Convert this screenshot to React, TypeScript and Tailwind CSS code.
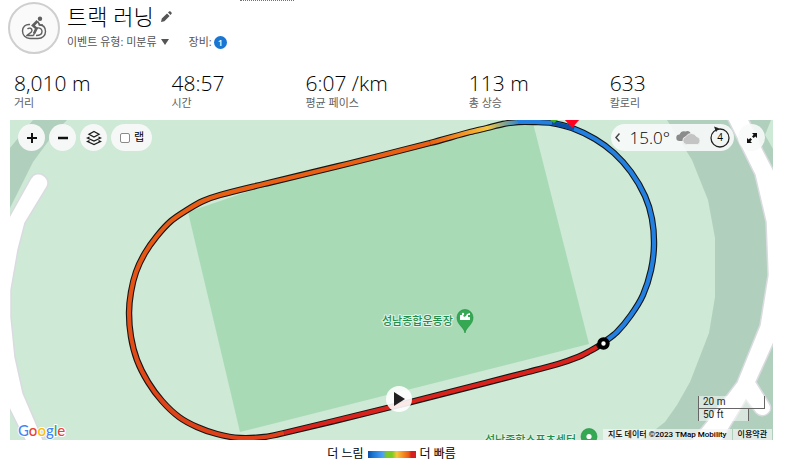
import { useState } from "react";

const STATS = [
  { value: "8,010 m", label: "거리" },
  { value: "48:57", label: "시간" },
  { value: "6:07 /km", label: "평균 페이스" },
  { value: "113 m", label: "총 상승" },
  { value: "633", label: "칼로리" },
];

type Point = [number, number];

// lap points, split where the pace colour changes
const FAST: Point[] = [
  [603, 343], [617, 332], [631, 315], [643, 295], [651, 270], [654, 245], [652, 219],
  [645, 196], [631, 172], [614, 153], [595, 139], [572, 128], [552, 123], [535, 122], [518, 122],
];
const FADE: Point[] = [[518, 122], [503, 124], [487, 128], [470, 132], [430, 143]];
const STEADY: Point[] = [
  [430, 143], [347, 164], [264, 184], [220, 195], [203, 201], [187, 210], [171, 221], [157, 236],
  [145, 253], [136, 272], [131, 292], [129, 313], [131, 337], [137, 360], [148, 382], [162, 401],
  [179, 417], [197, 427], [217, 434], [240, 438], [264, 437], [284, 433],
];
const SLOW: Point[] = [[284, 433], [387, 408], [528, 372], [558, 364], [578, 357], [590, 351], [597, 347]];

// Catmull-Rom spline through the points as a cubic path
const smooth = (pts: Point[]) => {
  let d = `M${pts[0][0]} ${pts[0][1]}`;
  for (let i = 0; i < pts.length - 1; i++) {
    const p0 = pts[i - 1] ?? pts[i];
    const p1 = pts[i];
    const p2 = pts[i + 1];
    const p3 = pts[i + 2] ?? p2;
    const len = Math.hypot(p2[0] - p1[0], p2[1] - p1[1]);
    const k1 = len / (Math.hypot(p2[0] - p0[0], p2[1] - p0[1]) * 3);
    const k2 = len / (Math.hypot(p3[0] - p1[0], p3[1] - p1[1]) * 3);
    d += `C${p1[0] + (p2[0] - p0[0]) * k1} ${p1[1] + (p2[1] - p0[1]) * k1} ${
      p2[0] - (p3[0] - p1[0]) * k2
    } ${p2[1] - (p3[1] - p1[1]) * k2} ${p2[0]} ${p2[1]}`;
  }
  return d;
};

const LAP = smooth([...FAST, ...FADE.slice(1), ...STEADY.slice(1), ...SLOW.slice(1), [603, 343]]);

const MapCanvas = () => (
  <svg
    className="absolute inset-0 h-full w-full"
    viewBox="10 120 763 320"
    preserveAspectRatio="xMidYMid slice"
    aria-hidden="true"
  >
    <defs>
      <linearGradient id="fade" gradientUnits="userSpaceOnUse" x1="430" y1="0" x2="522" y2="0">
        <stop offset="0" stopColor="#ea6014" />
        <stop offset="0.35" stopColor="#f39224" />
        <stop offset="0.62" stopColor="#f5c53e" />
        <stop offset="0.8" stopColor="#87a68f" />
        <stop offset="1" stopColor="#2380dc" />
      </linearGradient>
      <linearGradient id="warm" gradientUnits="userSpaceOnUse" x1="0" y1="190" x2="0" y2="436">
        <stop offset="0" stopColor="#e95f13" />
        <stop offset="1" stopColor="#de4019" />
      </linearGradient>
    </defs>
    <rect x="10" y="120" width="763" height="320" fill="#cee9d6" />

    {/* stands */}
    <path
      d="M667 120 692 160 708 200 715 238V297L709 333 690 382 677 405 665 422 651 433 640 440H773V120Z"
      fill="#b1cfbd"
    />
    <path d="M771 120 765 135 773 149V120Z" fill="#cee9d6" />
    <path d="M33 120H67L55 132 33 162 10 208V148Z" fill="#b1cfbd" />

    {/* paths */}
    <g fill="#fff" stroke="#dadbe0" strokeWidth="1.5">
      <path d="M727 118 755 175 766 222 768 275 760 325 737 382 708 420 690 442H721L746 400 756 413C763 420 775 412 769 403L756 382 775 340V173L763 150 748 118Z" />
      <path d="M8 219 31 178C37 168 52 177 47 187L25 223 18 250 11 290V317L15 357 23 393 44 442H26L8 406Z" />
    </g>

    {/* infield */}
    <path d="M188 212 240 432 589 344 533 123 503 126 264 186Z" fill="#a8dab5" />

    <path d={LAP} fill="none" stroke="#151515" strokeWidth="6.4" strokeLinejoin="round" />
    <g fill="none" strokeWidth="4.2" strokeLinejoin="round">
      <path d={smooth(SLOW)} stroke="#d9221c" />
      <path d={smooth(STEADY)} stroke="url(#warm)" />
      <path d={smooth(FADE)} stroke="url(#fade)" />
      <path d={smooth(FAST)} stroke="#2380e0" />
      <path d="M574 129 565 126 552 123" stroke="#0b4ea5" />
    </g>
    <path d="M550 120H558L554 123Z" fill="#3fae1f" />
    <path d="M564 119H580L572 128Z" fill="#ff001e" />
    <circle cx="603.5" cy="343.5" r="4.2" fill="#fff" stroke="#000" strokeWidth="4" />

    {/* places */}
    <path
      d="M465 333C464 327 457 325 457 317.500A8 8 0 0 1 473 317.500C473 325 466 327 465 333Z"
      fill="#34a853"
      stroke="#1e8e3e"
      strokeWidth="0.6"
    />
    <path d="M460 315h3l1 2 2-1 1-2 3-1v2h-2v2h2v3h-10z" fill="#fff" />
    <circle cx="463" cy="314" r="1.2" fill="#fff" />
    <circle cx="589" cy="436.500" r="8" fill="#34a853" stroke="#1e8e3e" strokeWidth="0.6" />
    <circle cx="589" cy="436.500" r="2.600" fill="#fff" />
    <g
      className="font-['Noto_Sans_CJK_KR',sans-serif] text-[11px] font-medium [paint-order:stroke]"
      fill="#1e8e4a"
      stroke="#e2f3e7"
      strokeWidth="2"
      strokeLinejoin="round"
    >
      <text x="382" y="325">성남종합운동장</text>
      <text x="485" y="444">성남종합스포츠센터</text>
    </g>
  </svg>
);

const RideIcon = () => (
  <svg width="26" height="24" viewBox="0 0 26 24" fill="none" stroke="#606060" strokeWidth="1.400">
    <path d="M9 8.500C4.500 8 1.500 11 1.500 15S4.500 22.500 9 22.500H17C21.500 22.500 24.500 19.500 24.500 15.500S22 8.800 17.500 8.800" />
    <path d="M6.500 13C8 11.500 11 12 11 14.500S7 18 6 19.500H12.500M12.500 19.500 15 12.500" />
    <path d="M16 12C19.500 11.500 21 13.500 21 15.500S19 19.500 15 19.500" />
    <circle cx="19" cy="2.800" r="2.200" fill="#606060" stroke="none" />
    <path d="M16.500 5 12 9.500 15.500 12.500 13 17.500" strokeWidth="2.600" />
    <path d="M16.500 5.500 19 9H22" strokeWidth="1.500" />
  </svg>
);

const LayersIcon = () => (
  <svg width="16" height="16" viewBox="0 0 16 16" fill="none" stroke="#1c1c1c" strokeWidth="1.300">
    <path d="M8 1.500 13 4.300 8 7 3 4.300Z" />
    <path d="M3.500 7 1.500 8 8 11 14.500 8 12.500 7" />
    <path d="M3.500 10.600 1.500 11.600 8 14.600 14.500 11.600 12.500 10.600" />
  </svg>
);

const CloudIcon = () => (
  <svg width="26" height="15" viewBox="0 0 26 15">
    <path
      d="M3.500 11A3.200 3.200 0 0 1 3.500 4.600 5 5 0 0 1 9.500 1.500C12 0 15 2 15 4.500L9 11Z"
      fill="#8b8b8b"
    />
    <path
      d="M10.500 14.500A4 4 0 0 1 10 6.600 6 6 0 0 1 20.500 6.500 4.200 4.200 0 0 1 21.500 14.500Z"
      fill="#c4c4c4"
      stroke="#f3f5f4"
      strokeWidth="0.800"
    />
  </svg>
);

const App = () => {
  const [lap, setLap] = useState(false);

  return (
    <div className="bg-white pr-[19px] font-['Open_Sans','Noto_Sans_CJK_KR',sans-serif] text-black">
      <div className="ml-60 w-[54px] border-t border-dotted border-neutral-500" />
      <header className="flex gap-[7px] pt-px pl-2">
        <div className="flex size-[52px] shrink-0 items-center justify-center rounded-full border-2 border-[#cfcfcf] bg-[#fafafa]">
          <RideIcon />
        </div>
        <div>
          <div className="flex items-center gap-[7px]">
            <h1 className="text-[22px] leading-7 font-light">트랙 러닝</h1>
            <button aria-label="이름 편집">
              <svg width="11" height="11" viewBox="0 0 11 11" fill="#555">
                <path d="M0 11 .8 7.600 6 2.400 8.600 5 3.400 10.200ZM7 1.500 8.300.300Q9 0 9.600.500L10.500 1.400Q11 2 10.600 2.700L9.500 4Z" />
              </svg>
            </button>
          </div>
          <div className="flex h-6 items-center text-[11px] leading-6 text-[#555]">
            <button className="flex items-center gap-1">
              이벤트 유형: 미분류
              <svg width="8" height="6" viewBox="0 0 8 6" fill="#555">
                <path d="M0 0H8L4 6Z" />
              </svg>
            </button>
            <span className="ml-5">장비:</span>
            <span className="ml-0.5 flex size-[13px] items-center justify-center rounded-full bg-[#1976d2] text-[9px] leading-none font-semibold text-white">
              1
            </span>
          </div>
        </div>
      </header>

      <dl className="flex flex-wrap gap-x-[81px] pt-[17px] pl-3.5">
        {STATS.map((stat) => (
          <div key={stat.label} className="flex flex-col-reverse">
            <dt className="text-[11px] leading-4 text-[#606060]">{stat.label}</dt>
            <dd className="text-[21px] leading-6 font-light">{stat.value}</dd>
          </div>
        ))}
      </dl>

      <main className="ml-2.5 pt-[9px]">
        <div className="relative h-80 overflow-hidden">
          <MapCanvas />
          <button
            aria-label="재생"
            className="absolute top-[266px] left-[51%] flex size-[26px] -translate-x-1/2 items-center justify-center rounded-full bg-white/90"
          >
            <svg width="12" height="14" viewBox="0 0 12 14" fill="#202020">
              <path d="M1 0 12 7 1 14Z" />
            </svg>
          </button>

          <div className="relative flex h-full flex-col justify-between">
            <div className="flex justify-between px-2 pt-1">
              <div className="flex gap-1">
                <button
                  aria-label="확대"
                  className="flex size-[27px] items-center justify-center rounded-full bg-[#f8f9f9]/95"
                >
                  <svg width="12" height="12" viewBox="0 0 12 12" stroke="#111" strokeWidth="2">
                    <path d="M1 6H11M6 1V11" />
                  </svg>
                </button>
                <button
                  aria-label="축소"
                  className="flex size-[27px] items-center justify-center rounded-full bg-[#f8f9f9]/95"
                >
                  <svg width="12" height="12" viewBox="0 0 12 12" stroke="#111" strokeWidth="2.500">
                    <path d="M1 6H11" />
                  </svg>
                </button>
                <button
                  aria-label="지도 레이어"
                  className="flex size-[27px] items-center justify-center rounded-full bg-[#f8f9f9]/95"
                >
                  <LayersIcon />
                </button>
                <label className="flex h-[27px] items-center gap-1 rounded-full bg-[#f8f9f9]/95 pr-2 pl-[9px] text-[11px]">
                  <input
                    type="checkbox"
                    checked={lap}
                    onChange={(e) => setLap(e.target.checked)}
                    className="size-2.5 appearance-none rounded-xs border border-[#8a8a8a] bg-white checked:bg-[#1976d2]"
                  />
                  랩
                </label>
              </div>

              <div className="flex gap-1">
                <div className="flex h-[27px] items-center rounded-full bg-[#f8f9f9]/90 px-1">
                  <button aria-label="날씨 접기">
                    <svg width="5" height="9" viewBox="0 0 5 9" fill="none" stroke="#444" strokeWidth="1.500">
                      <path d="M4.500.500 1 4.500 4.500 8.500" />
                    </svg>
                  </button>
                  <span className="ml-2.5 text-[17px] leading-6 font-light">15.0°</span>
                  <span className="ml-1.5">
                    <CloudIcon />
                  </span>
                  <span className="relative ml-2 flex size-5 items-center justify-center text-[10px]">
                    <svg
                      className="absolute inset-0 overflow-visible"
                      width="20"
                      height="20"
                      viewBox="0 0 20 20"
                      fill="none"
                      stroke="#222"
                      strokeWidth="1.300"
                    >
                      <circle cx="10" cy="10" r="9" />
                      <path d="M4-1.500 9 .300 6 4Z" fill="#222" stroke="none" />
                    </svg>
                    4
                  </span>
                </div>
                <button
                  aria-label="전체 화면"
                  className="flex size-[27px] items-center justify-center rounded-full bg-[#f8f9f9]/90"
                >
                  <svg width="10" height="10" viewBox="0 0 10 10" fill="#111">
                    <path d="M5 0H10V5L8.300 3.400 6.600 5 5 3.400 6.600 1.700ZM0 5 1.700 6.600 3.400 5 5 6.600 3.400 8.300 5 10H0Z" />
                  </svg>
                </button>
              </div>
            </div>

            <div className="flex items-end justify-between">
              <a
                href="#google"
                aria-label="Google"
                className="pl-2 font-['Lato',sans-serif] text-[15px] leading-5 font-medium text-[#4285f4] [paint-order:stroke] [-webkit-text-stroke:2px_white]"
              >
                G<span className="text-[#ea4335]">o</span>
                <span className="text-[#fbbc04]">o</span>g
                <span className="text-[#34a853]">l</span>
                <span className="text-[#ea4335]">e</span>
              </a>
              <div className="flex flex-col items-end font-['Roboto','Noto_Sans_CJK_KR',sans-serif] text-[#222]">
                <div className="mr-2 mb-2 w-[67px] text-[10px] leading-3">
                  <div className="border-x border-b border-[#666] bg-white/50 pl-1">20 m</div>
                  <div className="w-[51px] border-x border-[#666] bg-white/50 pl-1">50 ft</div>
                </div>
                <div className="flex gap-px pr-px text-[8px] leading-[11px] font-medium text-black">
                  <span className="bg-[#f5f5f5]/70 px-[5px]">지도 데이터 ©2023 TMap Mobility</span>
                  <a href="#terms" className="bg-[#f5f5f5]/70 px-[5px]">
                    이용약관
                  </a>
                </div>
              </div>
            </div>
          </div>
        </div>

        <div className="flex items-center justify-center gap-1 pt-1 text-[12px] leading-5">
          <span>더 느림</span>
          <span className="h-[7px] w-12 bg-[linear-gradient(90deg,#0a4fa8_0%,#1976d2_10%,#4a9ff5_30%,#7ccb22_40%,#7ccb22_50%,#f7c63e_60%,#f5831f_75%,#ea5a13_85%,#d62020_90%)]" />
          <span>더 빠름</span>
        </div>
      </main>
    </div>
  );
};

export default App;
